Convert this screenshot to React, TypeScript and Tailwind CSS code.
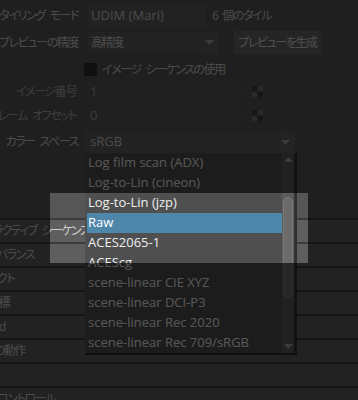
const jp = "font-['Open_Sans','Noto_Sans_CJK_JP',sans-serif] [font-feature-settings:'palt']"
const jpText = 'text-[12px] tracking-[-1.4px] [word-spacing:3px] whitespace-nowrap'

const colorSpaces = [
  'Log film scan (ADX)',
  'Log-to-Lin (cineon)',
  'Log-to-Lin (jzp)',
  'Raw',
  'ACES2065-1',
  'ACEScg',
  'scene-linear CIE XYZ',
  'scene-linear DCI-P3',
  'scene-linear Rec 2020',
  'scene-linear Rec 709/sRGB',
]

const sections = [
  { label: 'インタラクティブ シーケンス キャッシュのオプション', shift: 'ml-[-35px]' },
  { label: 'カラー バランス', shift: 'ml-[-37px]' },
  { label: 'エフェクト', shift: 'ml-[-30px]' },
  { label: 'UV 座標', shift: 'ml-[-30px]' },
  { label: 'Uuid', shift: 'ml-[-16px]' },
  { label: 'ノードの動作', shift: 'ml-[-33px]' },
  { label: '', shift: '' },
  { label: 'テクスチャ コントロール', shift: 'ml-[-53px]' },
]

function Arrow({ up = false }: { up?: boolean }) {
  return (
    <svg width="9" height="5" viewBox="0 0 9 5">
      <path d={up ? 'M0 5 L4.5 0 L9 5 Z' : 'M0 0 L9 0 L4.5 5 Z'} fill="#a3a3a3" />
    </svg>
  )
}

function Spinner() {
  return (
    <svg width="11" height="11" viewBox="0 0 11 11">
      <rect x="0" y="0" width="11" height="11" fill="#3f3f3f" />
      <rect x="5.5" y="0" width="5.5" height="5.5" fill="#727272" />
      <rect x="0" y="5.5" width="5.5" height="5.5" fill="#727272" />
    </svg>
  )
}

function Label({ children, dim = false }: { children: React.ReactNode; dim?: boolean }) {
  return (
    <div className={`w-[78px] shrink-0 flex justify-end ${jpText} ${dim ? 'text-[#a9a9a9] pr-[2px]' : 'text-[#cdcdcd]'}`}>
      {children}
    </div>
  )
}

export default function App() {
  return (
    <div className={`relative w-[358px] h-[400px] overflow-hidden bg-[#565656] ${jp}`}>
      <div className="flex flex-col">
        <div className="mt-[6px] h-[20px] flex items-center">
          <Label>UV タイリング モード</Label>
          <div className="ml-[9px] w-[119px] h-[20px] bg-[#606060] text-[13px] text-[#cfcfcf] pl-[4px] flex items-center">
            UDIM (Mari)
          </div>
          <span className={`ml-[6px] ${jpText} text-[#cdcdcd]`}>6 個のタイル</span>
        </div>

        <div className="mt-[5px] h-[23px] flex items-center">
          <Label>プレビューの精度</Label>
          <div className="ml-[9px] h-[21px] flex gap-[1px]">
            <div className={`w-[112px] bg-[#606060] ${jpText} text-[#cfcfcf] pl-[4px] flex items-center`}>高精度</div>
            <div className="w-[18px] bg-[#616161] flex items-center justify-center">
              <Arrow />
            </div>
          </div>
          <div className={`ml-[16px] w-[87px] h-[23px] bg-[#676767] ${jpText} text-[#d6d6d6] flex items-center justify-center`}>
            プレビューを生成
          </div>
        </div>

        <div className="mt-[8px] h-[15px] flex items-center">
          <div className="ml-[84px] w-[13px] h-[13px] bg-[#2e2e2e]" />
          <span className={`ml-[5px] ${jpText} text-[#cdcdcd]`}>イメージ シーケンスの使用</span>
        </div>

        <div className="mt-[6px] h-[17px] flex items-center">
          <Label dim>イメージ番号</Label>
          <div className="ml-[9px] w-[158px] h-[17px] bg-[#595959] text-[13px] text-[#a0a0a0] pl-[3px] flex items-center">1</div>
          <div className="ml-[7px]">
            <Spinner />
          </div>
        </div>

        <div className="mt-[7px] h-[17px] flex items-center">
          <Label dim>フレーム オフセット</Label>
          <div className="ml-[9px] w-[158px] h-[17px] bg-[#595959] text-[13px] text-[#a0a0a0] pl-[3px] flex items-center">0</div>
          <div className="ml-[7px]">
            <Spinner />
          </div>
        </div>

        <div className="mt-[7px] h-[22px] flex items-center">
          <Label>カラー スペース</Label>
          <div className="ml-[7px] w-[210px] h-[22px] flex bg-[#5e5e5e]">
            <div className="flex-1 text-[13px] text-[#d2d2d2] pl-[5px] flex items-center">sRGB</div>
            <div className="w-[19px] flex items-center justify-center bg-[#616161]">
              <Arrow />
            </div>
          </div>
        </div>

        <div className="mt-[65px] flex flex-col">
          {sections.map((s, i) => (
            <div key={i} className="border-t-2 border-[#3b3b3b] h-[24px] bg-[#5e5e5e] overflow-hidden flex items-center">
              <span className={`${s.shift} ${jpText} text-[#cfcfcf]`}>{s.label}</span>
            </div>
          ))}
        </div>
      </div>

      {/* colour space dropdown */}
      <div className="absolute left-[85px] top-[153px] w-[212px] h-[202px] flex bg-[#4f4f4f] border-r-2 border-b-2 border-[#2f2f2f]">
        <div className="flex-1 pl-[2px] flex flex-col">
          {colorSpaces.map((c) => (
            <div
              key={c}
              className={`h-[20px] pl-[1px] flex items-center whitespace-nowrap text-[13px] ${
                c === 'Raw' ? 'bg-[#4f87ab] text-white' : 'text-[#efefef]'
              }`}
            >
              {c}
            </div>
          ))}
        </div>
        <div className="w-[13px] bg-[#5b5b5b] border-r border-[#3a3a3a] flex flex-col items-center">
          <div className="h-[13px] flex items-center">
            <Arrow up />
          </div>
          <div className="mt-[31px] w-[10px] h-[100px] rounded-t-[5px] rounded-b-[3px] bg-[#6b6b6b] border border-[#7a7a7a]" />
          <div className="mt-auto h-[13px] flex items-center">
            <Arrow />
          </div>
        </div>
      </div>

      {/* spotlight */}
      <div className="absolute left-[50px] top-[193px] w-[258px] h-[70px] pointer-events-none shadow-[0_0_0_900px_rgba(0,0,0,0.64)]" />
    </div>
  )
}
